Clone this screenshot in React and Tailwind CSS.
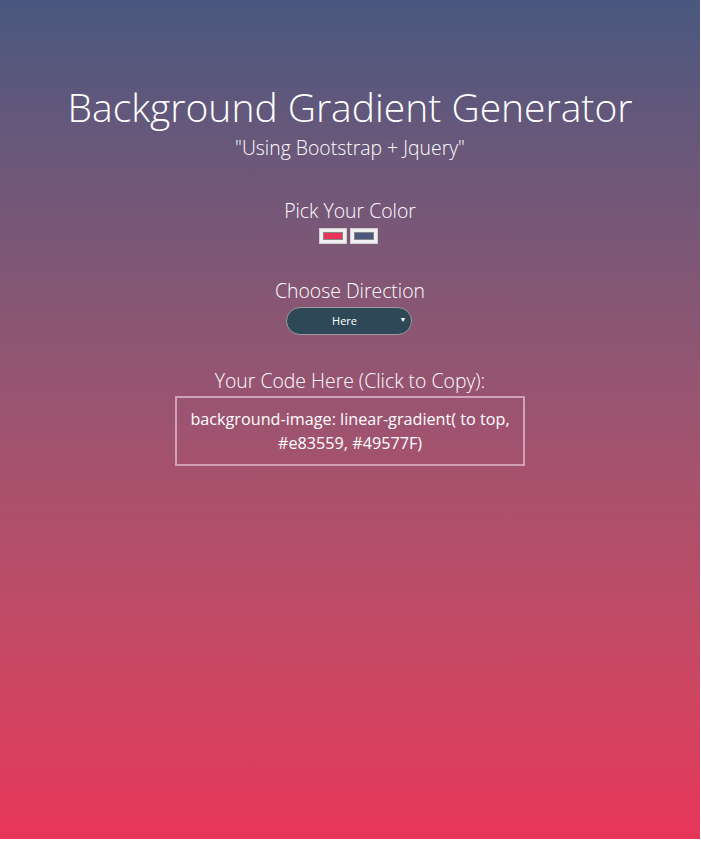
import React, { useState } from "react";

export default function App() {
  const [color1] = useState("#e83559");
  const [color2] = useState("#49577F");
  const [direction, setDirection] = useState("Here");

  return (
    <div
      className="w-[700px] h-[839px] bg-gradient-to-t from-[#e83559] to-[#49577F] text-white text-center"
      style={{ fontFamily: '"Open Sans", sans-serif' }}
    >
      <div className="pt-[79px] flex flex-col items-center">
        {/* Header */}
        <h1 className="text-[39px] font-light leading-[56px]">Background Gradient Generator</h1>
        <p className="text-[19.4px] font-light leading-[28px] mt-[-1px]">"Using Bootstrap + Jquery"</p>

        {/* Color pickers */}
        <p className="text-[19.4px] font-light leading-[28px] mt-[35px]">Pick Your Color</p>
        <div className="flex gap-[3px] mt-[3px] mr-[3px]">
          <div className="w-[28px] h-[16px] bg-[#efefef] border border-[#cfcfcf] p-[3px]">
            <div className="w-full h-full border border-[#888]" style={{ backgroundColor: color1 }} />
          </div>
          <div className="w-[28px] h-[16px] bg-[#efefef] border border-[#cfcfcf] p-[3px]">
            <div className="w-full h-full border border-[#888]" style={{ backgroundColor: color2 }} />
          </div>
        </div>

        {/* Direction */}
        <p className="text-[19.4px] font-light leading-[28px] mt-[33px]">Choose Direction</p>
        <div className="relative mt-[2px] mr-[3px]">
          <select
            value={direction}
            onChange={(e) => setDirection(e.target.value)}
            className="appearance-none w-[126px] h-[28px] rounded-full bg-[#2e4858] border border-[#9a9a9a] text-[11px] text-center pr-[8px] text-white outline-none"
          >
            <option>Here</option>
            <option>to top</option>
            <option>to bottom</option>
            <option>to left</option>
            <option>to right</option>
          </select>
          <span className="absolute right-[5px] top-[8px] text-[7px] pointer-events-none">▼</span>
        </div>

        {/* Code */}
        <p className="text-[19.4px] font-light leading-[28px] mt-[32px]">Your Code Here (Click to Copy):</p>
        <div className="w-[350px] h-[70px] border-2 border-[#d3a0b9] mt-[1px] pt-[9px] text-[16.2px] leading-[24px] cursor-pointer">
          background-image: linear-gradient( to top,
          <br />
          {color1}, {color2})
        </div>
      </div>
    </div>
  );
}
